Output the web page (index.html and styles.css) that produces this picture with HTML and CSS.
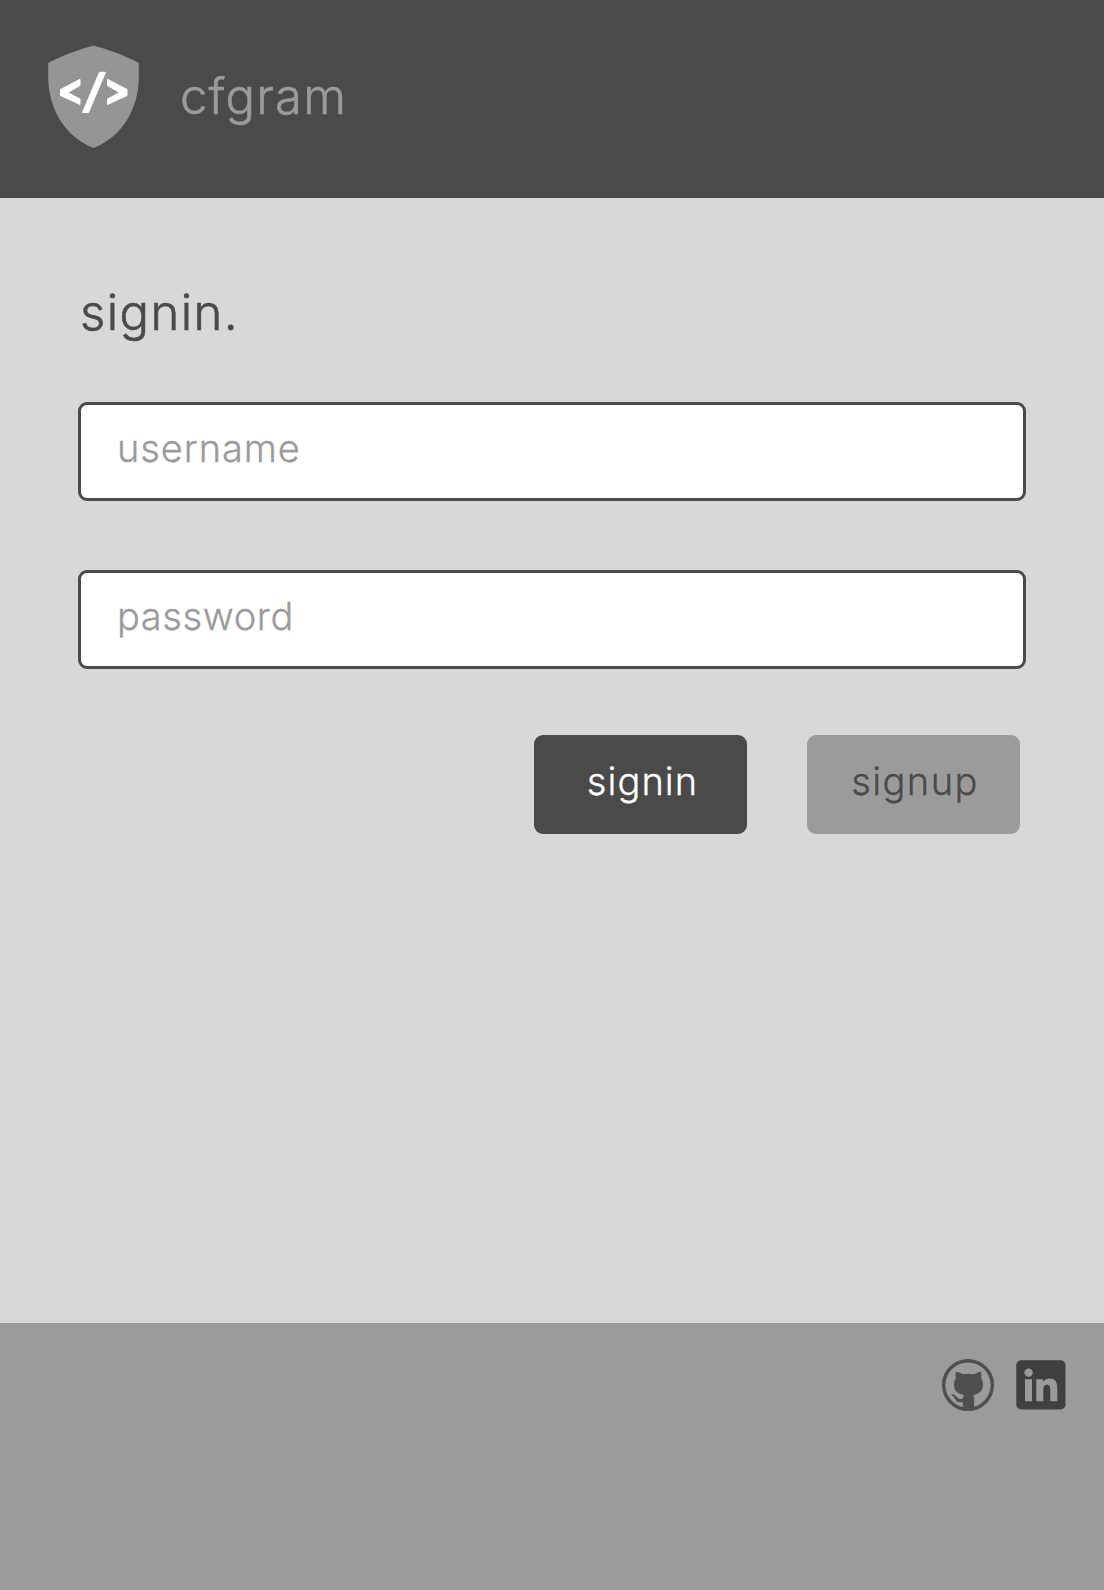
FILE: index.html
```html
<!DOCTYPE html>
<html lang="en">
<head>
<meta charset="utf-8">
<title>cfgram</title>
<link rel="stylesheet" href="styles.css">
</head>
<body>
<header class="header">
  <svg class="logo" viewBox="0 0 92 104" aria-hidden="true">
    <path fill="#959595" d="M45.500 .5C58 4 76 10 90.800 18V34C90 64 74 92 45.500 103C17 92 1 64 .200 34V18C15 10 33 4 45.500 .5Z"/>
    <path fill="#fff" stroke="#fff" stroke-linejoin="round" d="M32 34.300V40.500L19.800 47.500L32 54V59.500L12.500 50.500V44.500ZM51.500 27.300H57.500L40.500 67.500H34.500ZM59.500 34.300L79 44.500V50.500L59.500 59.500V54L71.500 47.500L59.500 40.500Z"/>
  </svg>
  <span class="brand">cfgram</span>
</header>
<main class="main">
  <h1 class="title">signin.</h1>
  <form class="form">
    <input class="field field-username" type="text" placeholder="username">
    <input class="field field-password" type="text" placeholder="password">
    <div class="actions">
      <button class="button button-signin" type="button">signin</button>
      <button class="button button-signup" type="button">signup</button>
    </div>
  </form>
</main>
<footer class="footer">
  <svg class="github" viewBox="0 0 52 52" aria-hidden="true">
    <circle cx="26" cy="26" r="24.300" fill="none" stroke="#4e4f51" stroke-width="3.400"/>
    <path fill="#4e4f51" d="M14.200 12.700C17 13 19.200 14.300 21 15.300C24.300 14.500 28.700 14.500 32 15.300C34 13.900 36.200 13 38.800 12.700C39.700 15 39.600 17.500 39.100 19.300C40.800 21.500 41.200 24.300 40.900 27C40.300 32.700 36.500 35.200 31.200 35.900C32 37.100 32.200 38.500 32.200 40V51H20.800V43.200C16.500 43.700 14.300 42.500 12.800 39.700C11.900 38 11.100 37.100 9.600 36.300C9.200 35.500 10.200 35.200 11.200 35.400C14.500 36 14.800 39.500 18.200 39.900C19.400 40 20.200 39.700 20.900 39.300C21 38 21.300 36.900 22 35.900C16.500 35.200 12.600 32.700 12 27C11.700 24.200 12.100 21.500 13.800 19.300C13.300 17.300 13.300 15 14.200 12.700Z"/>
  </svg>
  <svg class="linkedin" viewBox="0 0 50 50" aria-hidden="true">
    <rect x=".3" y=".3" width="49.200" height="49.200" rx="5" fill="#404040"/>
    <circle cx="12.600" cy="12.600" r="4.200" fill="#9b9b9b"/>
    <path fill="#9b9b9b" d="M9 19.200H16V41.200H9ZM20.300 19.200H27V22.200C28.400 19.900 30.900 18.600 33.700 18.600C39.700 18.600 41.300 22.700 41.300 28.700V41.200H34.300V30C34.300 27.200 33.900 24.700 31 24.700C28 24.700 27.300 27.100 27.300 30V41.200H20.300Z"/>
  </svg>
</footer>
</body>
</html>
```

FILE: styles.css
```css
* {
  box-sizing: border-box;
}

body {
  margin: 0;
  min-height: 1590px;
  display: flex;
  flex-direction: column;
  background: #d8d8d8;
  color: #4a4a4a;
  font-family: Inter, Lato, sans-serif;
  font-weight: 300;
  -webkit-text-stroke: 0.3px;
}

.header {
  height: 198px;
  padding: 45px 48px 0;
  display: flex;
  align-items: flex-start;
  gap: 40px;
  background: #4a4a4a;
}

.logo {
  width: 92px;
  height: 104px;
}

.brand {
  margin-top: 22px;
  color: #9b9b9b;
  font-size: 49px;
  line-height: 60px;
  letter-spacing: 1.2px;
  -webkit-text-stroke: 0.6px;
}

.main {
  height: 1125px;
  padding: 85px 78px 0;
}

.title {
  margin: 0 0 0 2px;
  height: 119px;
  font-size: 49px;
  font-weight: 300;
  line-height: 60px;
  letter-spacing: 1.4px;
  -webkit-text-stroke: 0.6px;
}

.form {
  display: flex;
  flex-direction: column;
}

.field {
  width: 948px;
  height: 99px;
  margin: 0 0 69px;
  padding: 0 36px 8px;
  border: 3px solid #4a4a4a;
  border-radius: 9px;
  background: #fff;
  color: #4a4a4a;
  font: 300 38px Inter, Lato, sans-serif;
  letter-spacing: 0.9px;
}

.field-password {
  letter-spacing: 0.6px;
}

.field::placeholder {
  color: #9b9b9b;
  opacity: 1;
}

.actions {
  display: flex;
  justify-content: flex-end;
  gap: 60px;
  margin: -3px 6px 0 0;
}

.button {
  width: 213px;
  height: 99px;
  padding: 0 0 8px 4px;
  border: 0;
  border-radius: 9px;
  font: 300 38px Inter, Lato, sans-serif;
  letter-spacing: 1.1px;
}

.button-signin {
  background: #4a4a4a;
  color: #fff;
}

.button-signup {
  padding-left: 3px;
  background: #9b9b9b;
  color: #4a4a4a;
  letter-spacing: 1.4px;
}

.footer {
  flex: 1;
  padding: 36px 38px 0;
  display: flex;
  justify-content: flex-end;
  gap: 22px;
  background: #9b9b9b;
}

.github {
  width: 52px;
  height: 52px;
}

.linkedin {
  width: 50px;
  height: 50px;
  margin-top: 1px;
}
```
